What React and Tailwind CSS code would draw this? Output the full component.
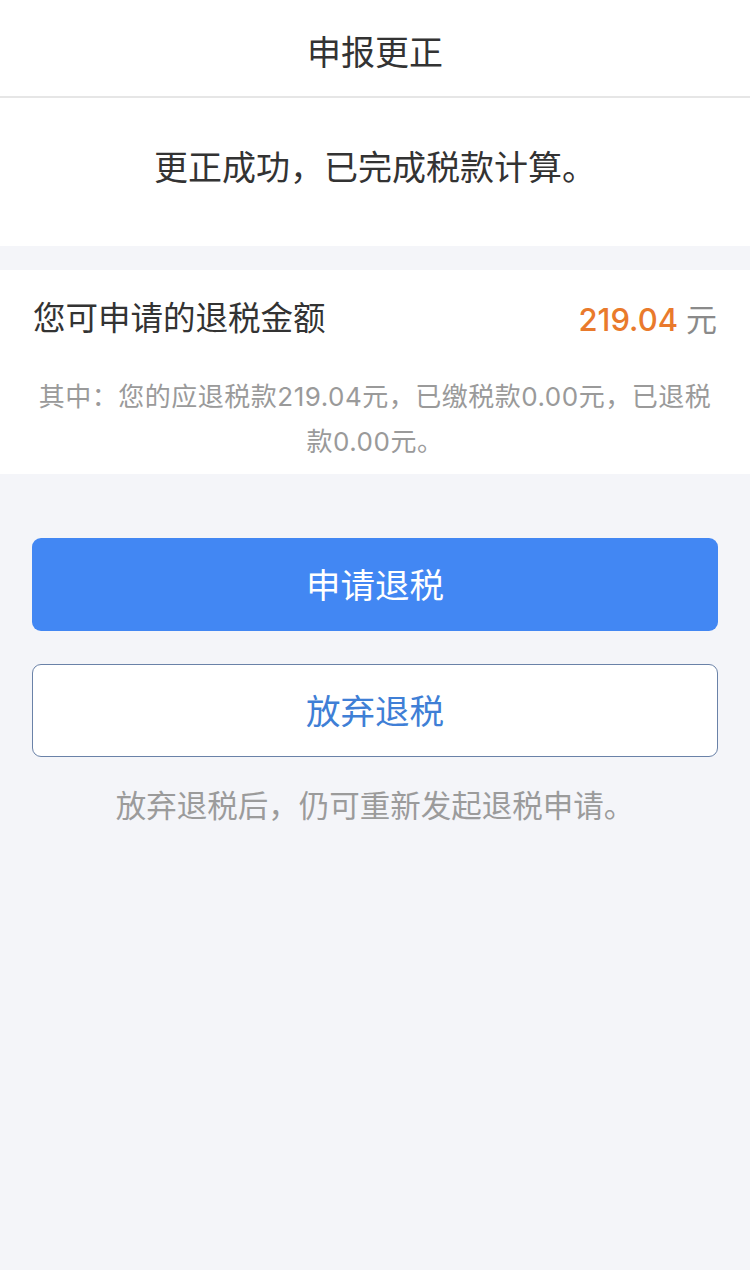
export default function App() {
  const font = { fontFamily: 'Inter, "Noto Sans CJK SC", "Noto Sans", sans-serif' };
  return (
    <div className="min-h-[1270px] w-[750px] bg-[#f4f5f9]" style={font}>
      <div className="h-[98px] bg-white border-b-2 border-[#e6e6e6] flex items-center justify-center pt-[10px]">
        <span className="text-[34px] text-[#333] leading-none">申报更正</span>
      </div>
      <div className="h-[148px] bg-white flex items-center justify-center pb-[8px]">
        <span className="text-[34px] text-[#333] leading-none">更正成功，已完成税款计算。</span>
      </div>
      <div className="h-[24px]" />
      <div className="bg-white px-[33px] pt-[25px] pb-[10px]">
        <div className="h-[48px] flex items-center justify-between">
          <span className="text-[32.5px] text-[#333] leading-none">您可申请的退税金额</span>
          <span className="flex items-baseline leading-none">
            <span className="text-[31px] font-medium text-[#e97a2c]">219.04</span>
            <span className="text-[31px] text-[#8a8a8a] ml-[8px]">元</span>
          </span>
        </div>
        <p className="mt-[31px] px-[2px] text-center text-[26px] leading-[45px] tracking-[0.5px] text-[#9a9a9a]">
          其中：您的应退税款219.04元，已缴税款0.00元，已退税款0.00元。
        </p>
      </div>
      <div className="px-[32px] pt-[64px]">
        <button className="w-full h-[93px] rounded-[9px] bg-[#4287f3] text-white text-[34.5px] flex items-center justify-center leading-none pt-[3px]">
          申请退税
        </button>
        <button className="mt-[33px] w-full h-[93px] rounded-[9px] bg-white border border-[#6a82a8] text-[#3f7fd6] text-[34.5px] flex items-center justify-center leading-none pt-[3px]">
          放弃退税
        </button>
        <p className="mt-[29px] text-center text-[30.5px] leading-[40px] text-[#9b9b9b]">
          放弃退税后，仍可重新发起退税申请。
        </p>
      </div>
    </div>
  );
}
